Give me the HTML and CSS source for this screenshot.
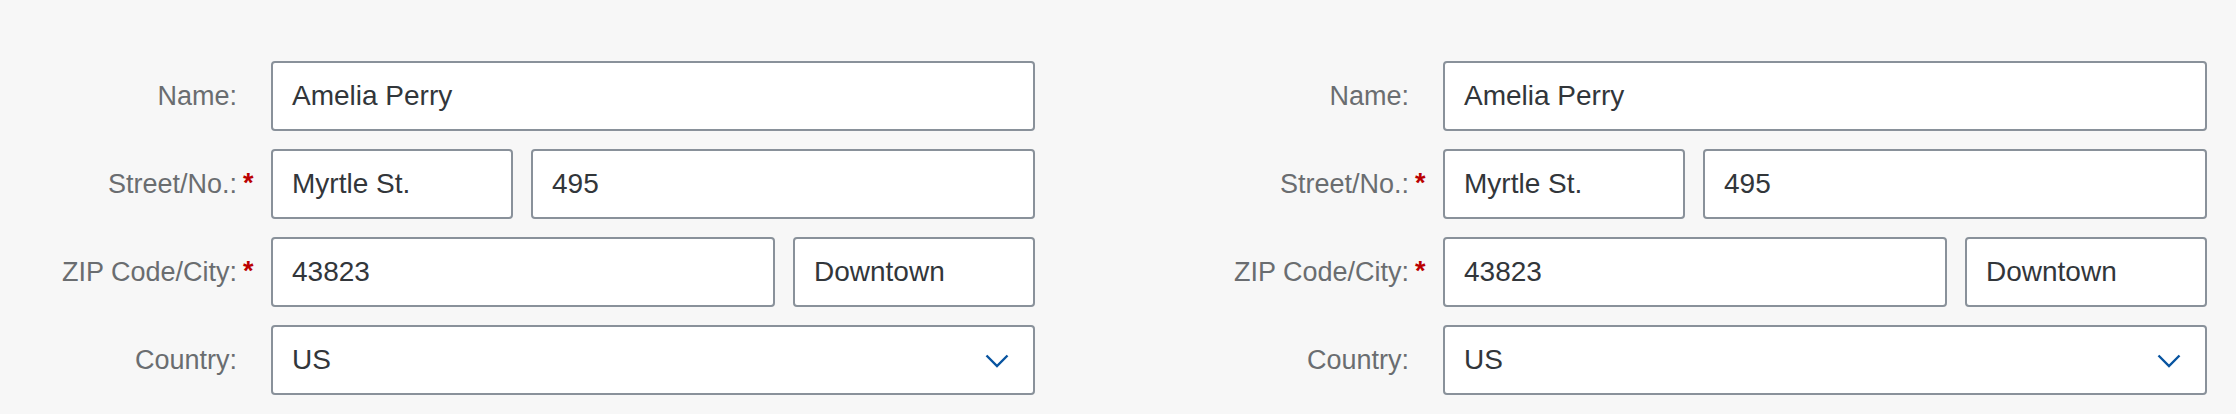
FILE: index.html
```html
<!DOCTYPE html>
<html lang="en">
<head>
<meta charset="utf-8">
<title>Address forms</title>
<link rel="stylesheet" href="styles.css">
</head>
<body>
<div class="page">
  <form class="form">
    <div class="label"><span class="text">Name:</span><span class="req"></span></div>
    <div class="fields"><div class="field">Amelia Perry</div></div>

    <div class="label"><span class="text">Street/No.:</span><span class="req">*</span></div>
    <div class="fields street"><div class="field">Myrtle St.</div><div class="field">495</div></div>

    <div class="label"><span class="text">ZIP Code/City:</span><span class="req">*</span></div>
    <div class="fields zip"><div class="field">43823</div><div class="field">Downtown</div></div>

    <div class="label"><span class="text">Country:</span><span class="req"></span></div>
    <div class="fields"><div class="field select"><span>US</span>
      <svg class="chev" width="24" height="14" viewBox="0 0 24 14"><polyline points="1.5,1.5 12,12 22.5,1.5" fill="none" stroke="#0854a0" stroke-width="2.4"/></svg>
    </div></div>
  </form>

  <form class="form">
    <div class="label"><span class="text">Name:</span><span class="req"></span></div>
    <div class="fields"><div class="field">Amelia Perry</div></div>

    <div class="label"><span class="text">Street/No.:</span><span class="req">*</span></div>
    <div class="fields street"><div class="field">Myrtle St.</div><div class="field">495</div></div>

    <div class="label"><span class="text">ZIP Code/City:</span><span class="req">*</span></div>
    <div class="fields zip"><div class="field">43823</div><div class="field">Downtown</div></div>

    <div class="label"><span class="text">Country:</span><span class="req"></span></div>
    <div class="fields"><div class="field select"><span>US</span>
      <svg class="chev" width="24" height="14" viewBox="0 0 24 14"><polyline points="1.5,1.5 12,12 22.5,1.5" fill="none" stroke="#0854a0" stroke-width="2.4"/></svg>
    </div></div>
  </form>
</div>
</body>
</html>
```
FILE: styles.css
```css
html, body {
  margin: 0;
  padding: 0;
  background: #f7f7f7;
}
body {
  font-family: "Liberation Sans", Arial, sans-serif;
  width: 2236px;
  height: 414px;
  overflow: hidden;
}
.page {
  display: flex;
  gap: 137px;
  padding-top: 61px;
}
.form {
  display: grid;
  grid-template-columns: 271px 764px;
  grid-auto-rows: 70px;
  row-gap: 18px;
  margin: 0;
}
.label {
  display: flex;
  justify-content: flex-end;
  align-items: center;
  padding-right: 16px;
  font-size: 27px;
  color: #6a6d70;
}
.label .req {
  width: 18px;
  box-sizing: border-box;
  padding-left: 6px;
  color: #bb0000;
  font-weight: bold;
  font-size: 27px;
  align-self: center;
  position: relative;
  top: -1px;
}
.fields {
  display: grid;
  grid-template-columns: 1fr;
  column-gap: 18px;
}
.fields.street {
  grid-template-columns: 242px 504px;
}
.fields.zip {
  grid-template-columns: 504px 242px;
}
.field {
  box-sizing: border-box;
  height: 70px;
  background: #ffffff;
  border: 2px solid #89919a;
  border-radius: 4px;
  padding: 0 19px;
  display: flex;
  align-items: center;
  font-size: 28px;
  color: #32363a;
}
.field.select {
  justify-content: space-between;
  padding-right: 24px;
}
.chev {
  display: block;
  margin-top: 2px;
}
```
